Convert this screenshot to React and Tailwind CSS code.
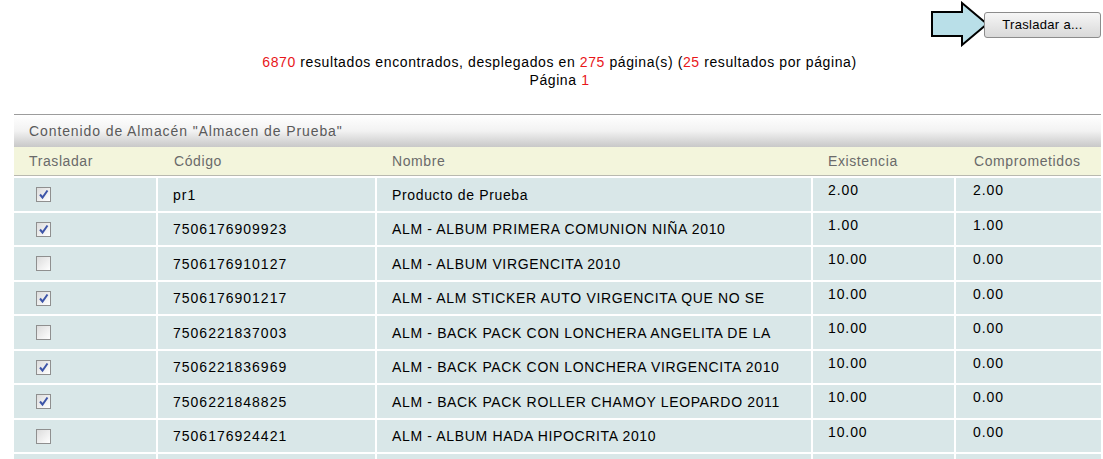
const rows = [
  { on: true, code: "pr1", name: "Producto de Prueba", stock: "2.00", held: "2.00" },
  { on: true, code: "7506176909923", name: "ALM - ALBUM PRIMERA COMUNION NIÑA 2010", stock: "1.00", held: "1.00" },
  { on: false, code: "7506176910127", name: "ALM - ALBUM VIRGENCITA 2010", stock: "10.00", held: "0.00" },
  { on: true, code: "7506176901217", name: "ALM - ALM STICKER AUTO VIRGENCITA QUE NO SE", stock: "10.00", held: "0.00" },
  { on: false, code: "7506221837003", name: "ALM - BACK PACK CON LONCHERA ANGELITA DE LA", stock: "10.00", held: "0.00" },
  { on: true, code: "7506221836969", name: "ALM - BACK PACK CON LONCHERA VIRGENCITA 2010", stock: "10.00", held: "0.00" },
  { on: true, code: "7506221848825", name: "ALM - BACK PACK ROLLER CHAMOY LEOPARDO 2011", stock: "10.00", held: "0.00" },
  { on: false, code: "7506176924421", name: "ALM - ALBUM HADA HIPOCRITA 2010", stock: "10.00", held: "0.00" },
];

const Check = ({ on }) => (
  <span className="inline-flex w-[15px] h-[15px] items-center justify-center border border-[#8f8f8f] bg-gradient-to-br from-[#dcdcdc] to-[#ffffff]">
    {on && (
      <svg width="11" height="11" viewBox="0 0 11 11">
        <path d="M2 5.5 L4.5 8.5 L9.5 1.5" fill="none" stroke="#3d55a8" strokeWidth="2" />
      </svg>
    )}
  </span>
);

const Arrow = () => (
  <svg width="60" height="46" viewBox="0 0 60 46" className="mr-[-6px]">
    <path d="M2 11 H32 V2 L57 23 L32 44 V35 H2 Z" fill="#b9dfe8" stroke="#000" strokeWidth="2" strokeLinejoin="miter" />
  </svg>
);

const cell = "bg-[#d9e7e8]";

export default function App() {
  return (
    <div className="w-[1103px] h-[459px] overflow-hidden bg-white text-black font-['Liberation_Sans',Arial,sans-serif]">
      <div className="flex justify-end items-start pt-[1px] pr-[2px] h-[53px]">
        <Arrow />
        <button className="mt-[11px] relative w-[117px] h-[26px] rounded-[3px] border border-[#8c8c8c] bg-gradient-to-b from-[#f6f6f6] to-[#d9d9d9] text-[13px] tracking-[0.3px]">
          Trasladar a...
        </button>
      </div>

      <div className="pl-[16px] text-center text-[14px] leading-[18px] tracking-[0.6px]">
        <p>
          <span className="text-[#e8161a]">6870</span> resultados encontrados, desplegados en{" "}
          <span className="text-[#e8161a]">275</span> página(s) (<span className="text-[#e8161a]">25</span> resultados por página)
        </p>
        <p>
          Página <span className="text-[#e8161a]">1</span>
        </p>
      </div>

      <div className="ml-[14px] mt-[25px] w-[1087px]">
        <div className="h-[33px] border-t border-[#9c9c9c] bg-gradient-to-b from-[#ffffff] via-[#f2f2f2] to-[#c8c8c8] pl-[15px] flex items-center text-[14px] text-[#5a5a5a] tracking-[0.9px]">
          Contenido de Almacén "Almacen de Prueba"
        </div>
        <div className="h-[29px] bg-[#f3f5dc] border-b border-[#b9b9b0] flex items-center text-[14px] text-[#6a6a6a] tracking-[0.6px]">
          <div className="w-[145px] pl-[15px]">Trasladar</div>
          <div className="w-[219px] pl-[15px]">Código</div>
          <div className="w-[436px] pl-[14px]">Nombre</div>
          <div className="w-[144px] pl-[14px]">Existencia</div>
          <div className="flex-1 pl-[16px]">Comprometidos</div>
        </div>
        <div className="mt-[2px] flex flex-col gap-[2px] text-[14px] leading-[16px] tracking-[0.65px]">
          {rows.map((r) => (
            <div key={r.code} className="h-[32.5px] shrink-0 flex gap-[2px]">
              <div className={`w-[142px] ${cell} pl-[22px] pt-[9px]`}>
                <Check on={r.on} />
              </div>
              <div className={`w-[217px] ${cell} pl-[15px] flex items-center pt-[1px] tracking-[1px]`}>{r.code}</div>
              <div className={`w-[434px] ${cell} pl-[15px] flex items-center pt-[1px]`}>{r.name}</div>
              <div className={`w-[141px] ${cell} pl-[15px] pt-[4px] tracking-[0.9px]`}>{r.stock}</div>
              <div className={`flex-1 ${cell} pl-[17px] pt-[4px] tracking-[0.9px]`}>{r.held}</div>
            </div>
          ))}
          <div className="h-[32.5px] shrink-0 flex gap-[2px]">
            <div className={`w-[142px] ${cell}`} />
            <div className={`w-[217px] ${cell}`} />
            <div className={`w-[434px] ${cell}`} />
            <div className={`w-[141px] ${cell}`} />
            <div className={`flex-1 ${cell}`} />
          </div>
        </div>
      </div>
    </div>
  );
}
